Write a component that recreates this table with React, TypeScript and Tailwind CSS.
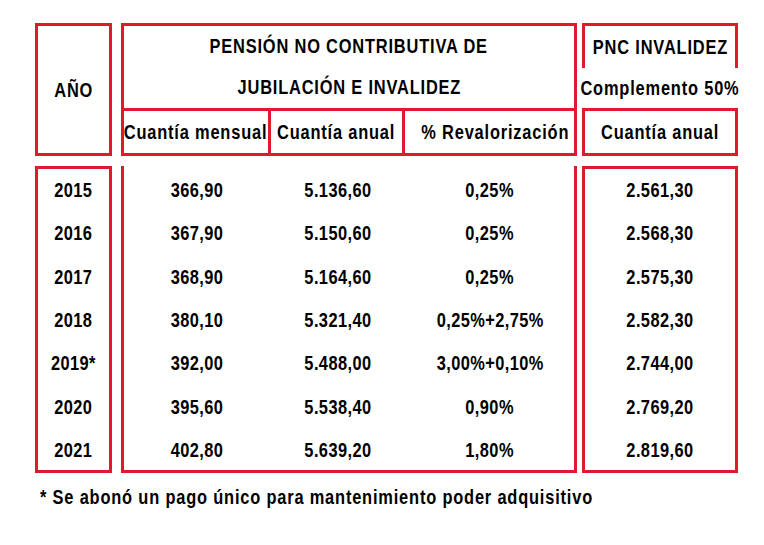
import React from "react";

const years = [
  ["2015", "366,90", "5.136,60", "0,25%", "2.561,30"],
  ["2016", "367,90", "5.150,60", "0,25%", "2.568,30"],
  ["2017", "368,90", "5.164,60", "0,25%", "2.575,30"],
  ["2018", "380,10", "5.321,40", "0,25%+2,75%", "2.582,30"],
  ["2019*", "392,00", "5.488,00", "3,00%+0,10%", "2.744,00"],
  ["2020", "395,60", "5.538,40", "0,90%", "2.769,20"],
  ["2021", "402,80", "5.639,20", "1,80%", "2.819,60"],
];

function T({ children }: { children: React.ReactNode }) {
  return <span className="inline-block whitespace-nowrap tracking-[1px] scale-x-[0.82]">{children}</span>;
}

function N({ children }: { children: React.ReactNode }) {
  return <span className="inline-block whitespace-nowrap tracking-[0.5px] scale-x-[0.82]">{children}</span>;
}

export default function App() {
  return (
    <div
      className="w-[764px] h-[545px] bg-white pl-[35px] pt-[23px] text-black font-bold text-[20px]"
      style={{ fontFamily: '"Liberation Sans", Arial, sans-serif' }}
    >
      {/* Header row */}
      <div className="flex">
        <div className="w-[77px] h-[133px] border-[3px] border-[#e1192d] flex items-center justify-center">
          <T>AÑO</T>
        </div>
        <div className="ml-[9px] w-[456px] h-[133px] border-[3px] border-[#e1192d] flex flex-col">
          <div className="h-[82px] flex flex-col items-center">
            <div className="h-[41px] leading-[41px]"><T>PENSIÓN NO CONTRIBUTIVA DE</T></div>
            <div className="h-[41px] leading-[41px]"><T>JUBILACIÓN E INVALIDEZ</T></div>
          </div>
          <div className="flex-1 border-t-[3px] border-[#e1192d] flex">
            <div className="w-[144px] flex items-center justify-center"><T>Cuantía mensual</T></div>
            <div className="w-[134px] border-l-[3px] border-[#e1192d] flex items-center justify-center"><T>Cuantía anual</T></div>
            <div className="flex-1 border-l-[3px] border-[#e1192d] flex items-center justify-center"><T>% Revalorización</T></div>
          </div>
        </div>
        <div className="ml-[5px] w-[156px] flex flex-col">
          <div className="h-[45px] border-x-[3px] border-t-[3px] border-[#e1192d] flex items-center justify-center">
            <T>PNC INVALIDEZ</T>
          </div>
          <div className="h-[40px] flex items-center justify-center"><T>Complemento 50%</T></div>
          <div className="h-[48px] border-[3px] border-[#e1192d] flex items-center justify-center"><T>Cuantía anual</T></div>
        </div>
      </div>

      {/* Data row */}
      <div className="flex mt-[10px]">
        <div className="w-[77px] h-[307px] border-[3px] border-[#e1192d] pt-[1px] flex flex-col justify-between">
          {years.map((r) => (
            <div key={r[0]} className="h-[40px] flex items-center justify-center"><N>{r[0]}</N></div>
          ))}
        </div>
        <div className="ml-[9px] w-[456px] h-[307px] border-x-[3px] border-b-[3px] border-[#e1192d] pt-[4px] flex flex-col justify-between">
          {years.map((r) => (
            <div key={r[0]} className="h-[40px] flex">
              <div className="w-[146px] flex items-center justify-center"><N>{r[1]}</N></div>
              <div className="w-[136px] flex items-center justify-center"><N>{r[2]}</N></div>
              <div className="flex-1 flex items-center justify-center"><N>{r[3]}</N></div>
            </div>
          ))}
        </div>
        <div className="ml-[5px] w-[156px] h-[307px] border-[3px] border-[#e1192d] pt-[1px] flex flex-col justify-between">
          {years.map((r) => (
            <div key={r[0]} className="h-[40px] flex items-center justify-center"><N>{r[4]}</N></div>
          ))}
        </div>
      </div>

      <div className="mt-[12px] ml-[5px] h-[24px] leading-[24px]">
        <span className="inline-block whitespace-nowrap tracking-[1px] scale-x-[0.82] origin-left">
          * Se abonó un pago único para mantenimiento poder adquisitivo
        </span>
      </div>
    </div>
  );
}
